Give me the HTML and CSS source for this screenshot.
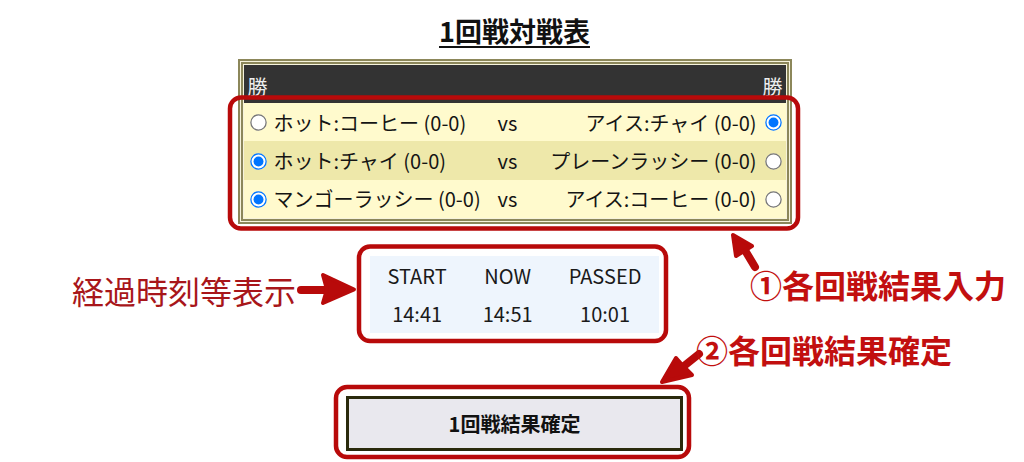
FILE: index.html
```html
<!DOCTYPE html>
<html lang="ja">
<head>
<meta charset="utf-8">
<title>1回戦対戦表</title>
<link rel="stylesheet" href="styles.css">
</head>
<body>
<main class="page">
  <h1 class="title">1回戦対戦表</h1>
  <div class="bracket">
    <div class="head"><span>勝</span><span>勝</span></div>
    <div class="match odd">
      <label class="side left"><input type="radio" name="m1"><span>ホット:コーヒー (0-0)</span></label>
      <span class="vs">vs</span>
      <label class="side right"><span>アイス:チャイ (0-0)</span><input type="radio" name="m1" checked></label>
    </div>
    <div class="match even">
      <label class="side left"><input type="radio" name="m2" checked><span>ホット:チャイ (0-0)</span></label>
      <span class="vs">vs</span>
      <label class="side right"><span>プレーンラッシー (0-0)</span><input type="radio" name="m2"></label>
    </div>
    <div class="match odd">
      <label class="side left"><input type="radio" name="m3" checked><span>マンゴーラッシー (0-0)</span></label>
      <span class="vs">vs</span>
      <label class="side right"><span>アイス:コーヒー (0-0)</span><input type="radio" name="m3"></label>
    </div>
  </div>
  <table class="clock">
    <tr><th>START</th><th>NOW</th><th>PASSED</th></tr>
    <tr><td>14:41</td><td>14:51</td><td>10:01</td></tr>
  </table>
  <button class="confirm" type="button">1回戦結果確定</button>
</main>

<div class="notes">
  <svg class="marks" width="1024" height="462" viewBox="0 0 1024 462" xmlns="http://www.w3.org/2000/svg">
    <g fill="none" stroke="#b80a0a" stroke-width="4.5">
      <rect x="230" y="97.5" width="568" height="131" rx="11"/>
      <rect x="359" y="246.5" width="307" height="94.5" rx="11"/>
      <rect x="336" y="387" width="353" height="70" rx="11"/>
    </g>
    <g fill="#b80a0a" stroke="#b80a0a" stroke-linejoin="round" stroke-linecap="round">
      <line x1="301" y1="290" x2="328" y2="290" stroke-width="8"/>
      <polygon points="323,275 354,289.5 323,303 327,289.5" stroke-width="4"/>
      <line x1="746" y1="252" x2="755" y2="267" stroke-width="8"/>
      <polygon points="733,235 736,256 744,251 752,246" stroke-width="4"/>
      <line x1="684" y1="366" x2="699" y2="354" stroke-width="8"/>
      <polygon points="662,382 676,358 684,367 692,375" stroke-width="4"/>
    </g>
  </svg>
  <div class="note note-clock">経過時刻等表示</div>
  <div class="note note-input">①各回戦結果入力</div>
  <div class="note note-confirm">②各回戦結果確定</div>
</div>
</body>
</html>
```

FILE: styles.css
```css
html, body {
  margin: 0;
  padding: 0;
  overflow: hidden;
  background: #ffffff;
}

body {
  font-family: "Noto Sans CJK JP", "Noto Sans", sans-serif;
  color: #141414;
  position: relative;
  height: 462px;
}

.page {
  display: flex;
  flex-direction: column;
  align-items: center;
  padding-left: 5px;
}

.title {
  margin: 13px 0 10px;
  font-size: 27px;
  line-height: 36px;
  font-weight: 700;
  text-decoration: underline;
  text-decoration-thickness: 2px;
  text-underline-offset: 4px;
  color: #111;
}

.bracket {
  width: 554px;
  box-sizing: border-box;
  border: 5px double #8c875a;
  padding: 1px;
  background: #f6f3dc;
  font-size: 20px;
}

.head {
  display: flex;
  justify-content: space-between;
  height: 38px;
  box-sizing: border-box;
  padding: 10px 3px 0 4px;
  line-height: 24px;
  background: #333333;
  color: #eeeeee;
}

.match {
  display: grid;
  grid-template-columns: 254px 40px 1fr;
  align-items: center;
  height: 38.4px;
  line-height: 28px;
  padding-top: 1px;
  box-sizing: border-box;
}

.odd { background: #fffacd; }
.even { background: #eee8aa; }

.side {
  display: flex;
  align-items: center;
  white-space: nowrap;
}

.left {
  gap: 9px;
  padding-left: 8px;
}

.right {
  justify-content: flex-end;
  gap: 10px;
  padding-right: 6px;
}

.side input {
  margin: 0;
  flex: 0 0 13px;
  width: 13px;
  height: 13px;
  transform: scale(1.27);
}

.vs {
  text-align: left;
}

.clock {
  margin-top: 32px;
  border-spacing: 0;
  padding-top: 1px;
  background: #eef5fd;
  font-size: 20px;
  color: #1a1a1a;
}

.clock th,
.clock td {
  height: 38px;
  padding: 0 18px;
  text-align: center;
  font-weight: 400;
  line-height: 28px;
}

.confirm {
  margin-top: 63px;
  width: 337px;
  height: 55px;
  box-sizing: border-box;
  border: 3px solid #2a2a0c;
  background: #e9e8ee;
  font-family: "Noto Sans CJK JP", "Noto Sans", sans-serif;
  font-size: 20px;
  font-weight: 700;
  color: #111;
}

.notes {
  position: absolute;
  left: 0;
  top: 0;
  width: 1024px;
  height: 462px;
  pointer-events: none;
}

.marks {
  position: absolute;
  left: 0;
  top: 0;
}

.note {
  position: absolute;
  font-size: 32px;
  line-height: 40px;
  white-space: nowrap;
}

.note-clock {
  left: 72px;
  top: 270px;
  color: #a8161a;
  font-weight: 400;
}

.note-input {
  left: 750px;
  top: 264px;
  color: #c20f0f;
  font-weight: 700;
}

.note-confirm {
  left: 696px;
  top: 329px;
  color: #c20f0f;
  font-weight: 700;
}
```
